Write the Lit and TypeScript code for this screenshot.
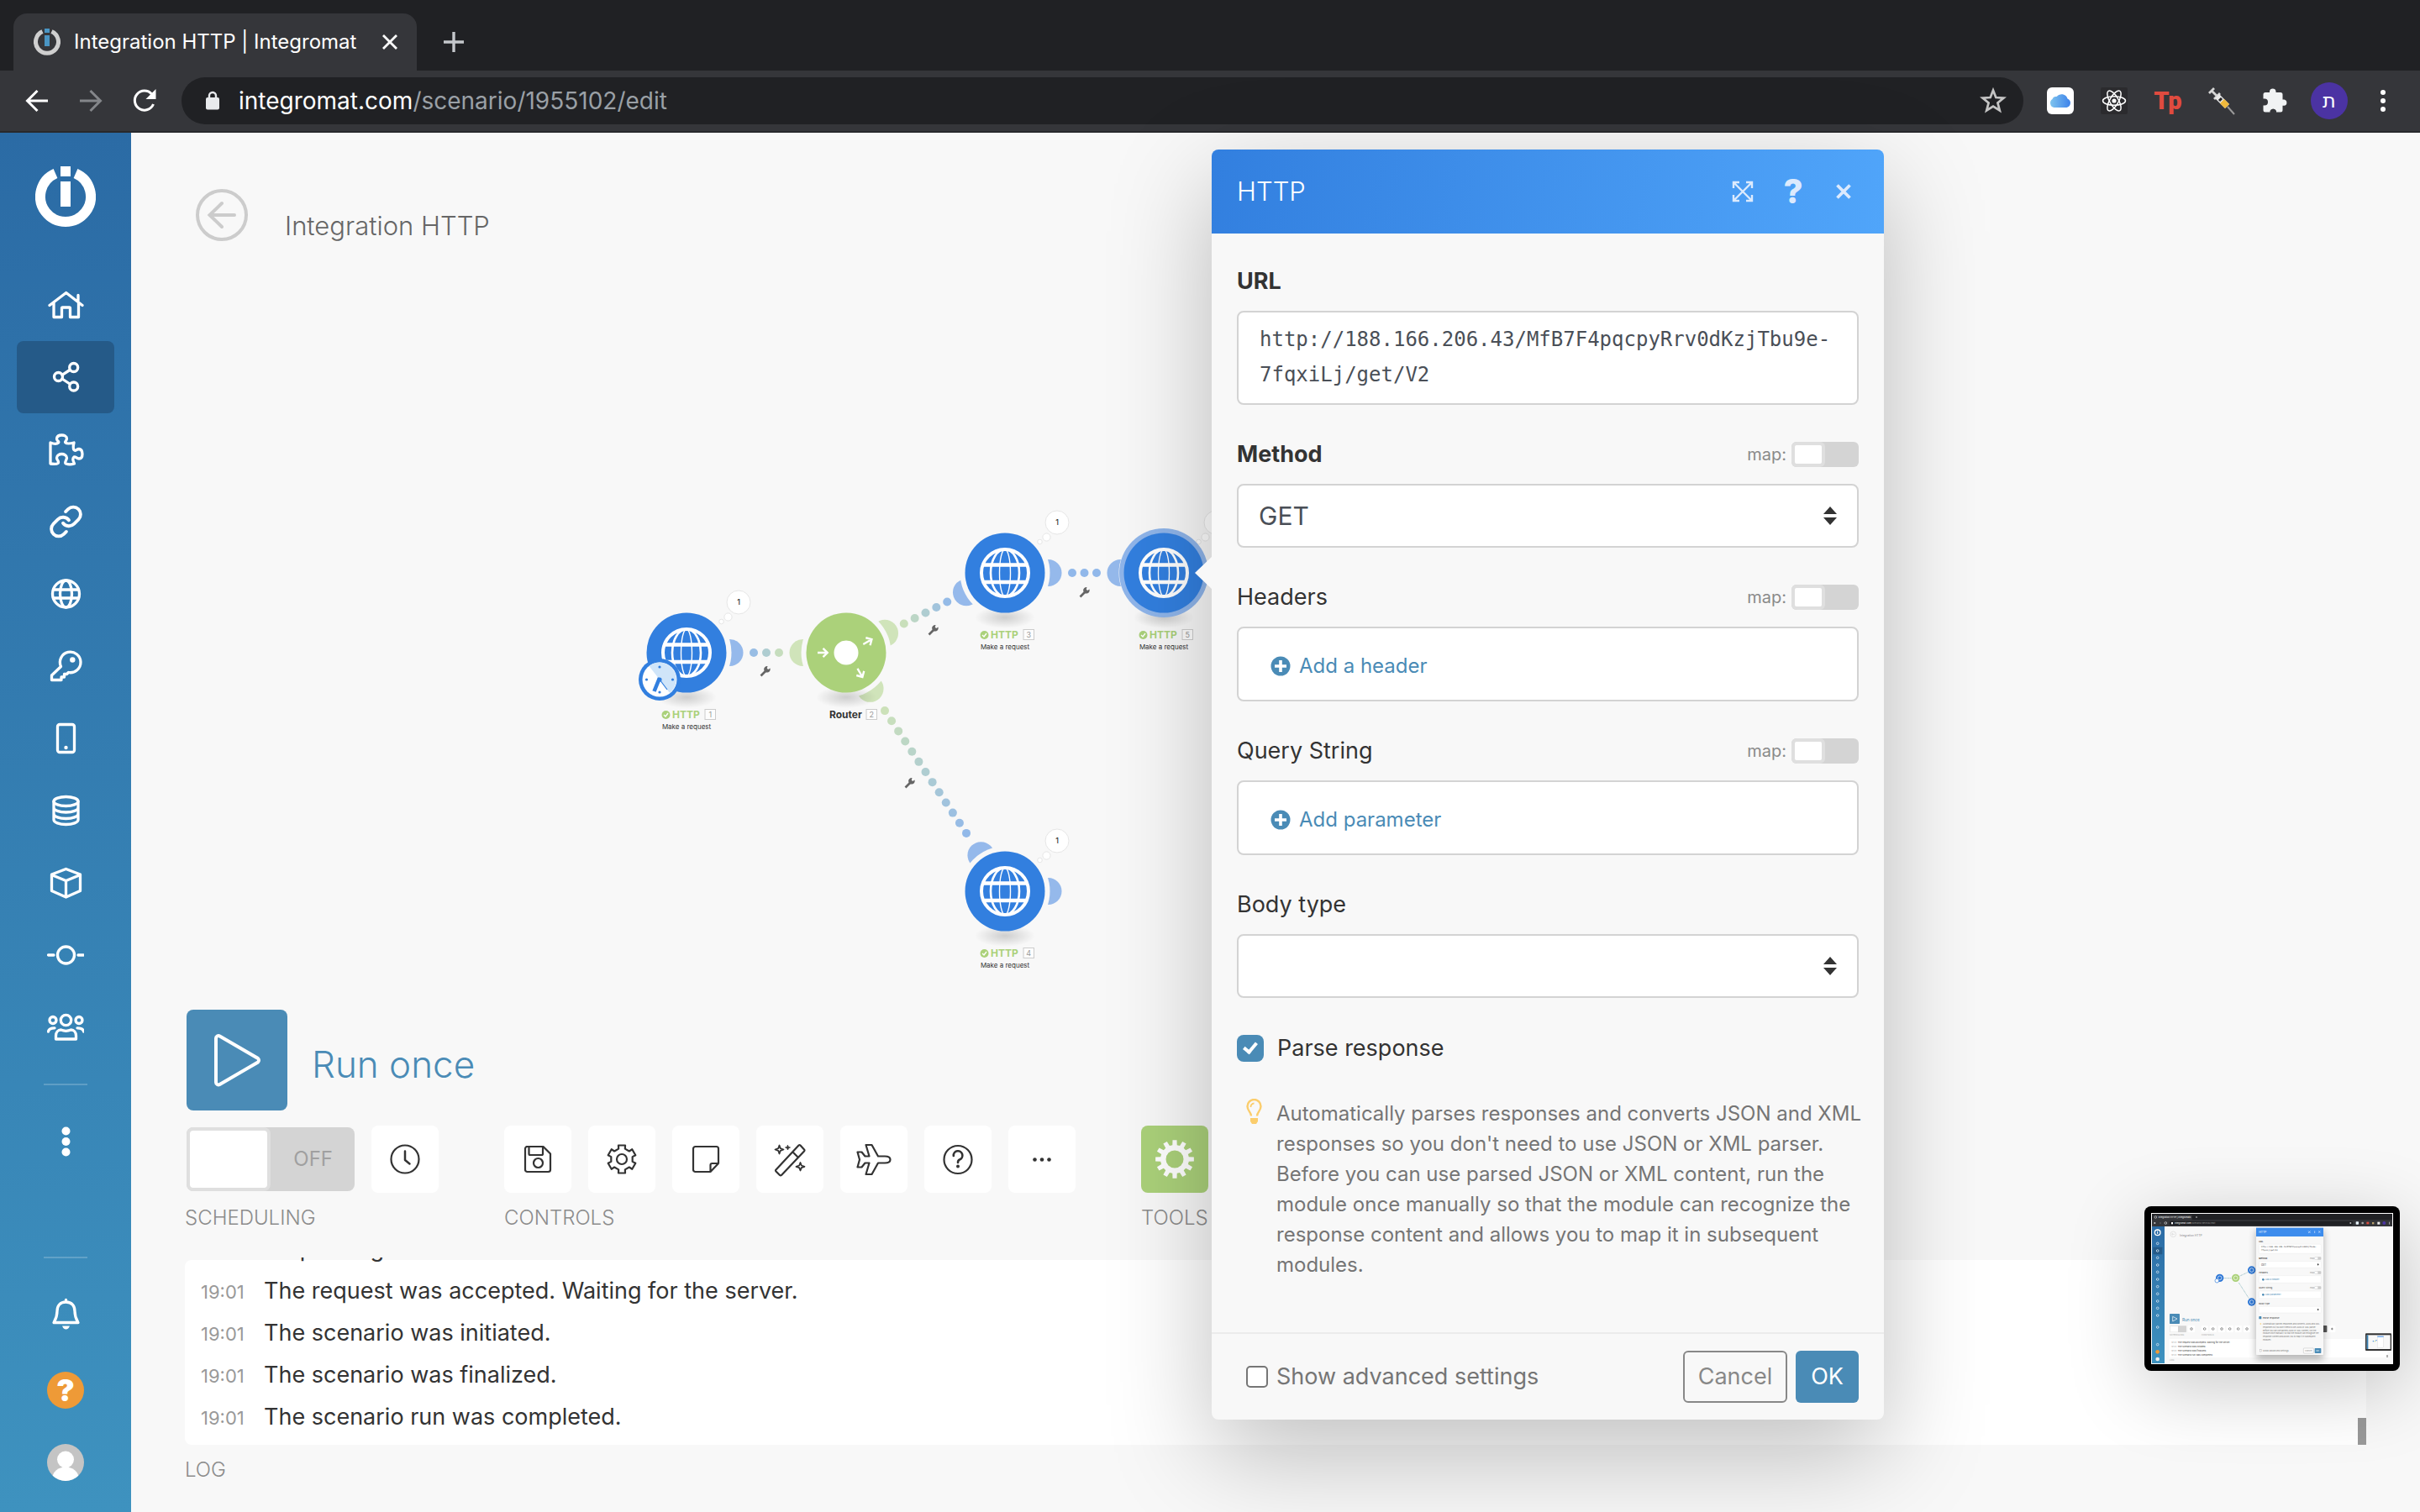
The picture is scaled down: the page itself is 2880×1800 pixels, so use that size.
import { LitElement, html, css, svg } from "lit";
import { customElement, property } from "lit/decorators.js";
import { classMap } from "lit/directives/class-map.js";

/** Outline of a toothed wheel, centred on cx, cy. */
function cog(cx: number, cy: number, teeth: number, outer: number, inner: number, tip: number, root: number): string {
  const pts: string[] = [];
  for (let i = 0; i < teeth; i++) {
    const a = (i / teeth) * Math.PI * 2 - Math.PI / 2;
    const add = (r: number, d: number) =>
      pts.push(`${(cx + r * Math.cos(a + d)).toFixed(2)} ${(cy + r * Math.sin(a + d)).toFixed(2)}`);
    add(inner, -root);
    add(outer, -tip);
    add(outer, tip);
    add(inner, root);
  }
  return `M${pts.join("L")}Z`;
}

const NAV = {
  home: svg`<path d="M3 22.5 22.7 7.5 42 22.5M8 19.5V36.5H17.5V26a1 1 0 0 1 1-1H26.500a1 1 0 0 1 1 1V36.500H37.500V19.500M37 10.500V17"/>`,
  share: svg`<circle cx="13.500" cy="21.500" r="5"/><circle cx="31.700" cy="10.500" r="5"/><circle cx="31.700" cy="33" r="5"/><path d="M18 19.300 27 13.500M18 24 27 30"/>`,
  puzzle: svg`<path d="M4 14C8 15.500 12 15.500 13.500 14C15 12 11 12 11.500 9C12 6 15 5 17.500 5S23.500 6 23.500 9C23.500 12 20.500 12.500 22 14C23.500 15.500 28 15 32 14C31 18 31 21 32 22.500C34 25 35 21.500 38 21.500C41 22 42 25 42 27.500S41 33 38 33C35 33 34 30 32 31C30 32.500 31 36 32.500 39C29 40 25 40 22.500 39C20 37.500 23.500 35 23.500 32C23.500 29 20 27.500 17.500 27.500S11.500 29 11.500 32C11.500 35 15 36.500 13 38.500C11 40 7 39.500 4 39Z"/>`,
  link: svg`<g transform="translate(1.500 1) scale(1.750)" stroke-width="2.200"><path d="M10 13a5 5 0 0 0 7.540.540l3-3a5 5 0 0 0-7.070-7.070l-1.720 1.710"/><path d="M14 11a5 5 0 0 0-7.540-.540l-3 3a5 5 0 0 0 7.070 7.070l1.710-1.710"/></g>`,
  globe: svg`<circle cx="22.500" cy="22" r="16"/><ellipse cx="22.500" cy="22" rx="7" ry="16"/><path d="M7.500 17H37.500M7.500 27H37.500"/>`,
  key: svg`<path d="M16.500 22.500 5.500 33V38.500H17V35H20.500V31.500H23.500L25.500 29.500A12.300 12.300 0 1 0 16.500 22.500Z"/><circle cx="30.300" cy="14.500" r="3.200" fill="#fff" stroke="none"/>`,
  tablet: svg`<rect x="12.500" y="5.500" width="20" height="33" rx="2.500"/><circle cx="22.500" cy="33" r="2.200" fill="#fff" stroke="none"/>`,
  database: svg`<ellipse cx="22.500" cy="11" rx="14.500" ry="5.500"/><path d="M8 11V33C8 36 14.500 38.500 22.500 38.500S37 36 37 33V11M8 18.500C8 21.500 14.500 24 22.500 24S37 21.500 37 18.500M8 26C8 29 14.500 31.500 22.500 31.500S37 29 37 26"/>`,
  cube: svg`<path d="M22.500 5.500 39.500 12V31.500L22.500 39 5.500 31.500V12ZM5.500 12.500 22.500 19.500 39.500 12.500M22.500 19.500V38.500"/>`,
  commit: svg`<circle cx="22.500" cy="22" r="10"/><path d="M1.500 22H8M37 22H43.500"/>`,
  users: svg`<circle cx="22.500" cy="13.500" r="6.200"/><circle cx="7" cy="13.500" r="4"/><circle cx="38" cy="13.500" r="4"/><path d="M10.500 36V32C10.500 28 13 25 16.500 25C20 26.500 25 26.500 28.500 25C32 25 34.500 28 34.500 32V36ZM1.500 27C2 24 4 22.800 9 22.800M43.500 27C43 24 41 22.800 36 22.800"/>`,
  more: svg`<g fill="#fff" stroke="none"><circle cx="22.500" cy="9.500" r="5"/><circle cx="22.500" cy="22" r="5"/><circle cx="22.500" cy="34.500" r="5"/></g>`,
  bell: svg`<path d="M22.500 7C15.500 7 12 11.500 12 18C12 25 10 28 8 31.500H37C35 28 33 25 33 18C33 11.500 29.500 7 22.500 7ZM22.500 4.500V7"/><path d="M18 35.500H27Q25.500 39.500 22.500 39.500T18 35.500Z" fill="#fff" stroke="none"/>`,
};

const TOOL = {
  clock: svg`<circle cx="20" cy="20" r="16.500"/><path d="M20 10.500V21L25.500 25.500" stroke-width="2.500"/>`,
  save: svg`<path d="M6.500 5H26.500L35 13.500V32.500A2.500 2.500 0 0 1 32.500 35H7.500A2.500 2.500 0 0 1 5 32.500V7.500A2.500 2.500 0 0 1 7.500 5M9.500 5V13.500A1.500 1.500 0 0 0 11 15H24.500A1.500 1.500 0 0 0 26 13.500V5"/><circle cx="20.500" cy="24.500" r="5.500"/>`,
  cog: svg`<path d="${cog(20, 20, 6, 17, 13, 0.24, 0.3)}"/><circle cx="20" cy="20" r="6"/>`,
  note: svg`<path d="M5 7.500A2.500 2.500 0 0 1 7.500 5H32.500A2.500 2.500 0 0 1 35 7.500V25L25.500 35H7.500A2.500 2.500 0 0 1 5 32.500ZM35 25H27.500A2 2 0 0 0 25.500 27V35"/>`,
  wand: svg`<path d="M3.500 32.500 30.500 3.500A1.500 1.500 0 0 1 32.500 3.500L37 8.500A1.500 1.500 0 0 1 37 10.500L10 39A1.500 1.500 0 0 1 8 39L3.500 34.500A1.500 1.500 0 0 1 3.500 32.500ZM23.500 11.500 29.500 17.500"/><path d="M7.500 3.500 8.800 7.200 12.500 8.500 8.800 9.800 7.500 13.500 6.200 9.800 2.500 8.500 6.200 7.200ZM32.500 24 33.800 27.500 37.500 28.800 33.800 30.100 32.500 33.500 31.200 30.100 27.500 28.800 31.200 27.500Z" stroke-width="1.800"/><path d="M17.500 3.500 18.500 5.500 20.500 6 18.500 6.700 17.500 9 16.500 6.700 14.500 6 16.500 5.500Z" fill="#333" stroke-width=".8"/>`,
  plane: svg`<path d="M13.500 3H20.500L28 16.500H36C40.500 16.500 42.500 18.500 42.500 20.500S40.500 24.500 36 24.500H28L20.500 38H13.500L17.500 24.500H12.500L8.500 29.500H3.500L6 20.500 3.500 11.500H8.500L12.500 16.500H17.500Z"/>`,
  help: svg`<circle cx="20" cy="20.500" r="16.500"/><path d="M14.800 16A5.300 5.300 0 1 1 22 20.500C20.500 21.200 20 22 20 24" stroke-width="2.600"/><circle cx="20" cy="28.500" r="2" fill="#333" stroke="none"/>`,
  dots: svg`<g fill="#333" stroke="none"><circle cx="11.500" cy="20.500" r="2.300"/><circle cx="20" cy="20.500" r="2.300"/><circle cx="28.500" cy="20.500" r="2.300"/></g>`,
};

type Glyph = unknown;

/* ---------- browser frame ---------- */

@customElement("browser-bar")
class BrowserBar extends LitElement {
  static styles = css`
    :host { display: block; background: #202124; font-family: Inter, "Liberation Sans", sans-serif; color: #fff; }
    svg { display: block; fill: none; }
    button { appearance: none; border: 0; background: none; padding: 0; margin: 0; color: inherit; font: inherit; display: grid; place-items: center; }
    .tabs { display: flex; align-items: stretch; padding: 16px 0 0 16px; height: 68px; }
    .tab { display: flex; align-items: center; background: #35363a; border-radius: 16px 16px 0 0; width: 480px; box-sizing: border-box; padding: 0 16px 0 24px; gap: 16px; }
    .tab-title { flex: 1; font-size: 24px; line-height: 28px; font-weight: 400; white-space: nowrap; }
    .close { width: 32px; height: 32px; }
    .new { width: 88px; }
    .bar { display: flex; align-items: center; height: 72px; background: #35363a; border-bottom: 2px solid #28292c; padding: 0 12px; }
    .nav { width: 64px; height: 56px; }
    .address { flex: 1; min-width: 0; display: flex; align-items: center; gap: 22px; height: 56px; border-radius: 28px; background: #202124; padding: 0 20px 0 28px; margin: 0 12px; box-sizing: border-box; }
    .url { flex: 1; font-size: 28px; line-height: 36px; color: #9aa0a6; white-space: nowrap; }
    .host { color: #fff; }
    .exts { display: flex; align-items: center; }
    .ext { width: 64px; height: 56px; }
    .icloud { width: 32px; height: 32px; border-radius: 6px; background: #fff; display: grid; place-items: center; }
    .tp { font: 900 29px/32px Roboto, sans-serif; color: #e04b3f; }
    .me { width: 44px; height: 44px; border-radius: 50%; background: #4b33a3; display: grid; place-items: center; font: 24px/28px "DejaVu Sans", sans-serif; }
  `;

  render() {
    return html`
      <div class="tabs">
        <div class="tab">
          <svg width="32" height="34" viewBox="0 0 32 34">
            <path d="M10.500 4.500A13.500 13.500 0 1 0 21.500 4.500" stroke="#cfcfcf" stroke-width="5"/>
            <path d="M16 1V6M16 9V22" stroke="#4a95c4" stroke-width="6"/>
          </svg>
          <span class="tab-title">Integration HTTP | Integromat</span>
          <button class="close" aria-label="Close tab">
            <svg width="20" height="20" viewBox="0 0 20 20"><path d="M2 2 18 18M18 2 2 18" stroke="#fff" stroke-width="2.800"/></svg>
          </button>
        </div>
        <button class="new" aria-label="New tab">
          <svg width="26" height="26" viewBox="0 0 26 26"><path d="M13 1V25M1 13H25" stroke="#c4c7cb" stroke-width="3.400"/></svg>
        </button>
      </div>
      <div class="bar">
        <button class="nav" aria-label="Back">
          <svg width="28" height="28" viewBox="0 0 28 28"><path d="M27 14H3M14.500 2 2.500 14 14.500 26" stroke="#fff" stroke-width="3"/></svg>
        </button>
        <button class="nav" aria-label="Forward">
          <svg width="28" height="28" viewBox="0 0 28 28"><path d="M1 14H25M13.500 2 25.500 14 13.500 26" stroke="#84868a" stroke-width="3"/></svg>
        </button>
        <button class="nav" aria-label="Reload">
          <svg width="30" height="30" viewBox="0 0 30 30"><path d="M25.500 19A11.500 11.500 0 1 1 23.500 7" stroke="#fff" stroke-width="3"/><path d="M28.500 1V13H16.500Z" fill="#fff"/></svg>
        </button>
        <div class="address">
          <svg width="18" height="24" viewBox="0 0 18 24"><rect x="1" y="8" width="16" height="14.500" rx="2" fill="#e8eaed"/><path d="M5 9V6A4 4 0 0 1 13 6V9" stroke="#e8eaed" stroke-width="2.400"/></svg>
          <span class="url"><span class="host">integromat.com</span>/scenario/1955102/edit</span>
          <button aria-label="Bookmark">
            <svg width="32" height="32" viewBox="0 0 32 32"><path d="M16 3.500 19.300 12 28.500 12.600 21.400 18.400 23.800 27.500 16 22.500 8.200 27.500 10.600 18.400 3.500 12.600 12.700 12Z" stroke="#c4c4c4" stroke-width="2.700"/></svg>
          </button>
        </div>
        <div class="exts">
          <button class="ext" aria-label="iCloud">
            <span class="icloud"><svg width="28" height="20" viewBox="0 0 28 20"><defs><linearGradient id="cl"><stop offset="0" stop-color="#7fc4ee"/><stop offset="1" stop-color="#3d82ea"/></linearGradient></defs><path d="M6.500 18A5.500 5.500 0 0 1 4.500 8 4.500 4.500 0 0 1 9.500 5 7.500 7.500 0 0 1 22.500 7.500 5.500 5.500 0 0 1 21.500 18Z" fill="url(#cl)"/></svg></span>
          </button>
          <button class="ext" aria-label="React">
            <svg width="32" height="32" viewBox="0 0 32 32"><rect width="32" height="32" rx="2" fill="#2b2b2e"/><g stroke="#fff" stroke-width="1.500"><ellipse cx="16" cy="16" rx="13.500" ry="5.200"/><ellipse cx="16" cy="16" rx="13.500" ry="5.200" transform="rotate(60 16 16)"/><ellipse cx="16" cy="16" rx="13.500" ry="5.200" transform="rotate(120 16 16)"/></g><circle cx="16" cy="16" r="2.600" fill="#fff"/></svg>
          </button>
          <button class="ext" aria-label="Tp extension"><span class="tp">Tp</span></button>
          <button class="ext" aria-label="Syringe extension">
            <svg width="34" height="34" viewBox="0 0 34 34"><path d="M2 8 8 2M5 5 11 11M8 15 15 8" stroke="#d6d6d6" stroke-width="2.800"/><path d="M9 14 14 9 26 21 21 26Z" fill="#e8e8e8"/><path d="M15 20 20 15 26 21 21 26Z" fill="#f0b93c"/><path d="M14 17 17 14" stroke="#222" stroke-width="3"/><path d="M24 24 32 33" stroke="#9a9a9a" stroke-width="2"/></svg>
          </button>
          <button class="ext" aria-label="Extensions">
            <svg width="32" height="32" viewBox="0 0 32 32"><path d="M24.500 14.500V8.500A2.500 2.500 0 0 0 22 6H16.500V4.800A3.800 3.800 0 0 0 9 4.800V6H4A2.500 2.500 0 0 0 1.500 8.500V13.500H3A4 4 0 0 1 3 21.500H1.500V27A2.500 2.500 0 0 0 4 29.500H9.500V28A4 4 0 0 1 17 28V29.500H22A2.500 2.500 0 0 0 24.500 27V21.800H26.300A3.700 3.700 0 0 0 26.300 14.500Z" fill="#f1f3f4"/></svg>
          </button>
          <button class="ext" aria-label="Profile"><span class="me">ת</span></button>
          <button class="ext" aria-label="Menu">
            <svg width="8" height="28" viewBox="0 0 8 28"><g fill="#fff"><circle cx="4" cy="4" r="3"/><circle cx="4" cy="14" r="3"/><circle cx="4" cy="24" r="3"/></g></svg>
          </button>
        </div>
      </div>
    `;
  }
}

/* ---------- left navigation ---------- */

@customElement("side-nav")
class SideNav extends LitElement {
  static styles = css`
    :host { display: flex; flex-direction: column; align-items: center; width: 156px; box-sizing: border-box; padding: 40px 0 16px; background: linear-gradient(#2b6ba5, #3e92bf); font-family: Inter, sans-serif; }
    svg { display: block; fill: none; stroke: #fff; stroke-width: 3.300; stroke-linecap: round; stroke-linejoin: round; }
    a { text-decoration: none; }
    .logo { margin-bottom: 50px; }
    .logo svg { stroke-width: 12; stroke-linecap: butt; }
    nav { display: flex; flex-direction: column; align-items: center; flex: 1; }
    .item { display: grid; place-items: center; width: 116px; height: 86px; border-radius: 8px; }
    .item.active { background: #255a88; }
    .rule { width: 52px; height: 2px; background: rgba(255, 255, 255, 0.2); margin: 24px 0; }
    .grow { flex: 1; }
    .support { margin-top: 4px; }
    .question { width: 44px; height: 44px; border-radius: 50%; background: #ee9a37; color: #fff; font-size: 36px; line-height: 44px; font-weight: 900; text-align: center; }
  `;

  private item(name: keyof typeof NAV, label: string, active = false) {
    return html`<a href="#${name}" aria-label=${label} class=${classMap({ item: true, active })}>
      <svg width="44" height="44" viewBox="0 0 44 44">${NAV[name]}</svg>
    </a>`;
  }

  render() {
    return html`
      <a class="logo" href="#start" aria-label="Integromat">
        <svg width="72" height="72" viewBox="0 0 72 72"><path d="M24 8.500A30 30 0 1 0 48 8.500"/><path d="M36 0V12M36 18V48"/></svg>
      </a>
      <nav>
        ${this.item("home", "Organization")}
        ${this.item("share", "Scenarios", true)}
        ${this.item("puzzle", "Templates")}
        ${this.item("link", "Connections")}
        ${this.item("globe", "Webhooks")}
        ${this.item("key", "Keys")}
        ${this.item("tablet", "Devices")}
        ${this.item("database", "Data stores")}
        ${this.item("cube", "Data structures")}
        ${this.item("commit", "Custom apps")}
        ${this.item("users", "Teams")}
        <div class="rule"></div>
        ${this.item("more", "More")}
        <div class="grow"></div>
        <div class="rule"></div>
        ${this.item("bell", "Notifications")}
        <a class="item support" href="#help" aria-label="Help"><span class="question">?</span></a>
        <a class="item" href="#profile" aria-label="Profile">
          <svg width="44" height="44" viewBox="0 0 44 44"><defs><clipPath id="round"><circle cx="22" cy="22" r="22"/></clipPath></defs><g clip-path="url(#round)" stroke="none"><rect width="44" height="44" fill="#c4c4c4"/><circle cx="22" cy="18.500" r="10" fill="#fff"/><ellipse cx="22" cy="40" rx="15.500" ry="12.500" fill="#fff"/></g></svg>
        </a>
      </nav>
    `;
  }
}

/* ---------- scenario diagram ---------- */

interface ScenarioNode {
  x: number;
  y: number;
  id: number;
  router?: boolean;
  selected?: boolean;
  scheduled?: boolean;
}

const BLUE = [145, 184, 234];
const GREEN = [205, 226, 184];
const mix = (t: number) => `rgb(${GREEN.map((g, i) => Math.round(g + (BLUE[i] - g) * t)).join(",")})`;

const NODES: ScenarioNode[] = [
  { x: 661, y: 447, id: 1, scheduled: true },
  { x: 851, y: 447, id: 2, router: true },
  { x: 1040, y: 352, id: 3 },
  { x: 1229, y: 352, id: 5, selected: true },
  { x: 1040, y: 731, id: 4 },
];

const LINKS = [
  { from: 0, to: 1, dots: 3, inset: 80, a: 1, b: 0, wrench: [755, 469] },
  { from: 1, to: 2, dots: 5, inset: 77, a: 0, b: 1, wrench: [955, 420] },
  { from: 2, to: 3, dots: 3, inset: 80, a: 1, b: 1, wrench: [1135, 375] },
  { from: 1, to: 4, dots: 13, inset: 83, a: 0, b: 1, wrench: [927, 602] },
];

@customElement("scenario-canvas")
class ScenarioCanvas extends LitElement {
  static styles = css`
    :host { display: block; flex: 1; min-height: 800px; }
    svg { display: block; width: 100%; height: 100%; font-family: Inter, sans-serif; }
    .app { font-size: 12px; font-weight: 700; fill: #abd17a; }
    .router { font-size: 12px; font-weight: 700; fill: #333; }
    .num { font-size: 9px; fill: #999; text-anchor: middle; }
    .action { font-size: 8px; fill: #333; text-anchor: middle; }
    .order { font-size: 9px; font-weight: 500; fill: #333; text-anchor: middle; }
  `;

  private port(x: number, y: number, dx: number, dy: number, green: boolean) {
    const d = Math.hypot(dx, dy);
    return svg`<circle cx=${x + (dx / d) * 51.5} cy=${y + (dy / d) * 51.5} r="16" fill=${green ? "#d0e4ba" : "#95b9eb"}/>`;
  }

  private link(l: (typeof LINKS)[number]) {
    const p = NODES[l.from];
    const q = NODES[l.to];
    const dx = q.x - p.x;
    const dy = q.y - p.y;
    const len = Math.hypot(dx, dy);
    const gap = (len - 2 * l.inset) / (l.dots - 1);
    const dots = Array.from({ length: l.dots }, (_, i) => {
      const s = (l.inset + i * gap) / len;
      const t = l.a + (l.b - l.a) * ((i + 0.3) / (l.dots - 0.4));
      return svg`<circle cx=${p.x + dx * s} cy=${p.y + dy * s} r="5" fill=${mix(t)}/>`;
    });
    return svg`
      ${this.port(p.x, p.y, dx, dy, !!p.router)}
      ${this.port(q.x, q.y, -dx, -dy, !!q.router)}
      ${dots}
      <g transform="translate(${l.wrench[0]} ${l.wrench[1]})">
        <path d="M-5.500 5.500 1.500 -1.500" stroke="#666" stroke-width="2.600" fill="none"/>
        <path d="M5.500 -3.500A3.800 3.800 0 1 1 2.500 -6L1.800 -3.200 3.200 -2Z" fill="#666"/>
      </g>`;
  }

  private globe() {
    return svg`
      <g stroke="#fff" fill="none">
        <circle r="28" stroke-width="4"/>
        <ellipse rx="17" ry="28" stroke-width="2.600"/>
        <ellipse rx="6.500" ry="28" stroke-width="1.400"/>
        <path d="M-26 -9.500H26M-26 11H26" stroke-width="4.600"/>
      </g>`;
  }

  private routerMark() {
    const arrow = svg`<path d="M-6 0H5.500M.5 -5.200 5.700 0 .5 5.200" stroke="#fff" stroke-width="2.400" fill="none"/>`;
    return svg`
      <circle r="14.500" fill="#fff"/>
      <g transform="translate(-28 0)">${arrow}</g>
      <g transform="translate(25.500 -13) rotate(-30)">${arrow}</g>
      <g transform="translate(16.500 24) rotate(60)">${arrow}</g>`;
  }

  private clock() {
    return svg`
      <g transform="translate(-32 32)">
        <circle r="25" fill="#327fdf"/>
        <circle r="20.500" fill="#fff"/>
        <path d="M0 0-12.500 -16A20.500 20.500 0 0 1 0 -20.500 20.500 20.500 0 0 1 12 16Z" fill="#d0e5f9"/>
        <path d="M0 -2-6.500 14" stroke="#327fdf" stroke-width="4.600"/>
        <path d="M0 0 9 12" stroke="#327fdf" stroke-width="1.200"/>
        <circle r="2.600" fill="#327fdf"/>
        <g fill="#327fdf"><circle cy="-15" r="1.600"/><circle cy="15" r="1.600"/><circle cx="-15.500" r="1.600"/><circle cx="15.500" r="1.600"/></g>
      </g>`;
  }

  private badge(id: number, x: number) {
    return svg`
      <rect x=${x} y="67.500" width="12.500" height="12" fill="#fdfdfd" stroke="#ccc"/>
      <text class="num" x=${x + 6.25} y="77">${id}</text>`;
  }

  private node(n: ScenarioNode) {
    const label = n.router
      ? svg`<text class="router" x="-20" y="78">Router</text>${this.badge(n.id, 24)}`
      : svg`
        <circle cx="-24.500" cy="74" r="5" fill="#abd17a"/>
        <path d="M-27 74-25 76-22 72" stroke="#fff" stroke-width="1.400" fill="none"/>
        <text class="app" x="-17" y="78">HTTP</text>
        ${this.badge(n.id, 22)}
        <text class="action" y="91">Make a request</text>`;
    const bubble = n.router
      ? ""
      : svg`
        <g fill="#fff" stroke="#e6e6e6">
          <circle cx="62" cy="-60" r="14"/><circle cx="49.500" cy="-42.500" r="4.600"/><circle cx="41.500" cy="-37" r="2.800"/>
        </g>
        <text class="order" x="62" y="-57">1</text>`;
    return svg`
      <g transform="translate(${n.x} ${n.y})">
        <ellipse cy="53" rx="36" ry="13" fill="url(#shade)"/>
        ${bubble}
        ${n.selected ? svg`<circle r="53" fill="#8fb5ea"/>` : svg``}
        <circle r="47.500" fill=${n.router ? "#abd17a" : "#327fdf"}/>
        ${n.router ? this.routerMark() : this.globe()}
        ${n.scheduled ? this.clock() : svg``}
        ${label}
      </g>`;
  }

  render() {
    const last = NODES[4];
    return html`
      <svg>
        <defs><radialGradient id="shade"><stop offset="0" stop-color="#000" stop-opacity=".17"/><stop offset="1" stop-color="#000" stop-opacity="0"/></radialGradient></defs>
        ${LINKS.map((l) => this.link(l))}
        ${this.port(last.x, last.y, 1, 0, false)}
        ${NODES.map((n) => svg`<circle cx=${n.x} cy=${n.y} r="53.500" fill="#f8f8f8"/>`)}
        ${NODES.map((n) => this.node(n))}
      </svg>
    `;
  }
}

/* ---------- module settings panel ---------- */

@customElement("module-panel")
class ModulePanel extends LitElement {
  static styles = css`
    :host { display: block; width: 800px; font-family: Inter, "Liberation Sans", sans-serif; color: #333; font-size: 27px; line-height: 30px; border-radius: 8px; background: #f8f8f8; box-shadow: 0 40px 120px rgba(0, 0, 0, 0.25); }
    svg { display: block; flex: none; fill: none; }
    button { appearance: none; border: 0; background: none; padding: 0; margin: 0; font: inherit; color: inherit; }
    .head { display: flex; align-items: center; height: 100px; padding: 0 30px; border-radius: 8px 8px 0 0; background: linear-gradient(100deg, #327fdf, #50a5fa); color: #fff; box-sizing: border-box; }
    h2 { flex: 1; margin: 0; font-size: 31px; line-height: 40px; font-weight: 300; }
    .tool { display: grid; place-items: center; width: 36px; height: 40px; margin-left: 24px; color: #dceafd; font-size: 40px; line-height: 40px; font-weight: 800; }
    .pointer { position: absolute; left: -20px; top: 484px; }
    .body { display: flex; flex-direction: column; gap: 44px; padding: 42px 30px 62px; }
    .row { display: flex; align-items: center; margin-bottom: 20px; }
    .name { flex: 1; }
    .strong { font-weight: 700; }
    .map { display: flex; align-items: center; gap: 6px; font-size: 20px; color: #8a8a8a; }
    .map input { appearance: none; margin: 0; width: 80px; height: 30px; border-radius: 6px; background: #d4d4d4; }
    .map input::before { content: ""; display: block; box-sizing: border-box; width: 40px; height: 30px; border: 4px solid #dfdfdf; border-radius: 6px; background: #fff; }
    .box { box-sizing: border-box; width: 100%; border: 2px solid #d3d3d3; border-radius: 8px; background: #fff; color: #4a4f57; margin: 0; }
    textarea.box { display: block; height: 112px; resize: none; overflow: hidden; padding: 11px 25px; font: 24px/42px "DejaVu Sans Mono", monospace; outline: none; }
    .pick { display: grid; align-items: center; }
    .pick > * { grid-area: 1 / 1; }
    .pick svg { justify-self: end; margin-right: 26px; pointer-events: none; }
    select.box { appearance: none; height: 76px; padding: 0 24px; font: 30px/40px Inter, sans-serif; }
    .list { display: flex; align-items: center; height: 89px; padding: 0 38px; }
    .add { display: flex; align-items: center; gap: 10px; font-size: 24px; line-height: 32px; color: #4a8bb6; padding-top: 5px; }
    .check { display: flex; align-items: center; gap: 16px; height: 32px; }
    .check input { appearance: none; margin: 0; width: 32px; height: 32px; border-radius: 8px; background: #4a8bb6; display: grid; place-items: center; }
    .check input::before { content: ""; box-sizing: border-box; width: 10px; height: 16px; border: solid #fff; border-width: 0 4px 4px 0; transform: rotate(40deg); margin-bottom: 4px; }
    .hint { display: flex; gap: 17px; padding-left: 11px; margin-right: -10px; }
    .hint p { margin: 0; font-size: 24px; line-height: 36px; color: #757575; }
    .foot { display: flex; align-items: center; gap: 10px; padding: 20px 30px; border-top: 2px solid #ebebeb; }
    .advanced { flex: 1; display: flex; align-items: center; gap: 10px; padding-left: 11px; color: #757575; }
    .advanced input { appearance: none; box-sizing: border-box; margin: 0; width: 26px; height: 26px; border: 2px solid #767676; border-radius: 5px; background: #fff; }
    .btn { height: 62px; border-radius: 6px; box-sizing: border-box; padding: 0 18px; }
    .cancel { border: 2px solid #888; color: #888; padding: 0 16px; }
    .ok { background: #4a8bb6; color: #fff; }
  `;

  private mapSwitch(id: string) {
    return html`<label class="map" for=${id}>map: <input id=${id} type="checkbox" role="switch" /></label>`;
  }

  private picker(id: string, value: string) {
    return html`<div class="pick">
      <select class="box" id=${id}><option>${value}</option></select>
      <svg width="16" height="22" viewBox="0 0 16 22"><path d="M8 0 16 9H0ZM8 22 0 13H16Z" fill="#333"/></svg>
    </div>`;
  }

  private adder(text: string) {
    return html`<div class="box list">
      <button class="add">
        <svg width="24" height="24" viewBox="0 0 24 24"><circle cx="12" cy="12" r="11.500" fill="#4a8bb6"/><path d="M12 5V19M5 12H19" stroke="#fff" stroke-width="3.600"/></svg>
        ${text}
      </button>
    </div>`;
  }

  render() {
    return html`
      <svg class="pointer" width="21" height="40" viewBox="0 0 21 40"><path d="M21 0 0 20 21 40Z" fill="#f8f8f8"/></svg>
      <div class="head">
        <h2>HTTP</h2>
        <button class="tool" aria-label="Expand">
          <svg width="26" height="26" viewBox="0 0 26 26" stroke="#dceafd" stroke-width="2.400"><path d="M2 2 24 24M24 2 2 24M2 9V2H9M17 2H24V9M24 17V24H17M9 24H2V17"/></svg>
        </button>
        <button class="tool" aria-label="Help">?</button>
        <button class="tool" aria-label="Close">
          <svg width="20" height="20" viewBox="0 0 20 20"><path d="M2.500 2.500 17.500 17.500M17.500 2.500 2.500 17.500" stroke="#dceafd" stroke-width="3.800"/></svg>
        </button>
      </div>
      <div class="body">
        <div>
          <div class="row"><label class="name strong" for="url">URL</label></div>
          <textarea class="box" id="url" rows="2" spellcheck="false" .value=${"http://188.166.206.43/MfB7F4pqcpyRrv0dKzjTbu9e-7fqxiLj/get/V2"}></textarea>
        </div>
        <div>
          <div class="row"><label class="name strong" for="method">Method</label>${this.mapSwitch("map-method")}</div>
          ${this.picker("method", "GET")}
        </div>
        <div>
          <div class="row"><span class="name">Headers</span>${this.mapSwitch("map-headers")}</div>
          ${this.adder("Add a header")}
        </div>
        <div>
          <div class="row"><span class="name">Query String</span>${this.mapSwitch("map-query")}</div>
          ${this.adder("Add parameter")}
        </div>
        <div>
          <div class="row"><label class="name" for="body-type">Body type</label></div>
          ${this.picker("body-type", "")}
        </div>
        <label class="check" for="parse"><input id="parse" type="checkbox" checked />Parse response</label>
        <div class="hint">
          <svg width="19" height="30" viewBox="0 0 19 30"><path d="M6 20.500C6 16 1.500 14.500 1.500 9A8 8 0 0 1 17.500 9C17.500 14.500 13 16 13 20.500" stroke="#fbcd6c" stroke-width="2.400"/><path d="M5.500 10A4 4 0 0 1 9.500 5.500" stroke="#fbcd6c" stroke-width="1.800"/><path d="M5 23H14V27L12 30H7L5 27Z" fill="#fbcd6c"/></svg>
          <p>Automatically parses responses and converts JSON and XML responses so you don't need to use JSON or XML parser. Before you can use parsed JSON or XML content, run the module once manually so that the module can recognize the response content and allows you to map it in subsequent modules.</p>
        </div>
      </div>
      <div class="foot">
        <label class="advanced" for="advanced"><input id="advanced" type="checkbox" />Show advanced settings</label>
        <button class="btn cancel">Cancel</button>
        <button class="btn ok">OK</button>
      </div>
    `;
  }
}

/* ---------- floating capture preview ---------- */

@customElement("capture-preview")
class CapturePreview extends LitElement {
  static styles = css`
    :host { display: block; box-sizing: border-box; width: 304px; padding: 8px; border-radius: 8px; background: #000; box-shadow: 0 20px 90px rgba(0, 0, 0, 0.22); }
    svg { display: block; width: 286px; height: 178px; border: 1px solid #fff; font-family: Inter, sans-serif; }
    .s { font-size: 8px; }
    .m { font-size: 11px; }
    .l { font-size: 16px; font-weight: 300; }
    .b { font-weight: 600; }
  `;

  render() {
    const icons = [61, 87, 112, 138, 163, 189, 215, 241, 267, 292, 318, 360, 422];
    const tools = [188, 218, 249, 278, 308, 339];
    const box = (y: number, h: number) => svg`<rect x="382" y=${y} width="222" height=${h} rx="3" fill="#fff" stroke="#e4e4e4"/>`;
    const map = (y: number) => svg`<text class="s" x="564" y=${y + 3} fill="#999">map:</text><rect x="581" y=${y - 5} width="23" height="10" rx="2" fill="#ccc"/><rect x="582" y=${y - 4} width="10" height="8" fill="#fff"/>`;
    const ball = (x: number, y: number, c: string) => svg`<circle cx=${x} cy=${y} r="14" fill=${c}/><circle cx=${x} cy=${y} r="7" fill="none" stroke="#fff" stroke-width="2"/>`;
    const hint = [
      "Automatically parses responses and converts JSON and XML",
      "responses so you don't need to use JSON or XML parser.",
      "Before you can use parsed JSON or XML content, run the",
      "module once manually so that the module can recognize the",
      "response content and allows you to map it in subsequent",
      "modules.",
    ];
    const log = [
      "The request was accepted. Waiting for the server.",
      "The scenario was initiated.",
      "The scenario was finalized.",
      "The scenario run was completed.",
    ];
    return html`
      <svg viewBox="0 0 858 534" fill="#333" role="img" aria-label="Screen capture">
        <defs>
          <linearGradient id="side" x2="0" y2="1"><stop offset="0" stop-color="#2b6ba5"/><stop offset="1" stop-color="#3e92bf"/></linearGradient>
          <filter id="soft" x="-30%" y="-30%" width="160%" height="160%"><feGaussianBlur stdDeviation="14"/></filter>
        </defs>
        <rect width="858" height="534" fill="#f8f8f8"/>
        <rect width="858" height="45" fill="#35363a"/>
        <path d="M0 0H858V22H143V8Q143 4 139 4H9Q5 4 5 8V22H0Z" fill="#202124"/>
        <rect x="62" y="26" width="656" height="15" rx="7" fill="#202124"/>
        <circle cx="13" cy="12" r="4" fill="none" stroke="#ccc" stroke-width="2"/>
        <text class="s" x="23" y="15" fill="#fff">Integration HTTP | Integromat</text>
        <path d="M134 9 139 15M139 9 134 15M156 12H162M159 9V15" stroke="#ddd" stroke-width="1.500"/>
        <text class="s" x="81" y="36" fill="#999"><tspan fill="#fff">integromat.com</tspan>/scenario/1955102/edit</text>
        <rect x="69" y="30" width="6" height="7" fill="#fff"/>
        <circle cx="10" cy="33" r="3" fill="#ccc"/><circle cx="30" cy="33" r="2" fill="#777"/><circle cx="49" cy="33" r="4" fill="none" stroke="#ddd" stroke-width="2"/><circle cx="709" cy="33" r="3" fill="#bbb"/>
        <rect x="728" y="28" width="10" height="10" rx="2" fill="#e8f3fd"/><circle cx="752" cy="33" r="4" fill="#aaa"/><rect x="766" y="29" width="9" height="8" fill="#d94b3f"/><rect x="786" y="30" width="7" height="7" fill="#b9a06c"/><rect x="805" y="29" width="9" height="9" fill="#eee"/><circle cx="829" cy="33" r="6" fill="#4b33a3"/><rect x="846" y="29" width="2" height="9" fill="#ddd"/>
        <rect y="45" width="45" height="489" fill="url(#side)"/>
        <rect x="4" y="119" width="33" height="26" rx="2" fill="#255a88"/>
        <circle cx="20" cy="67" r="10" fill="none" stroke="#fff" stroke-width="4"/><path d="M20 56V60M20 62V72" stroke="#fff" stroke-width="3"/>
        ${icons.map((y) => svg`<circle cx="20" cy=${y + 45} r="4" fill="none" stroke="#cfe0ee" stroke-width="2.500"/>`)}
        <circle cx="20" cy="493" r="7" fill="#ee9a37"/><circle cx="20" cy="519" r="7" fill="#eee"/>
        <circle cx="76" cy="73" r="10" fill="none" stroke="#ccc" stroke-width="1.500"/><path d="M81 73H71M75 69 71 73 75 77" fill="none" stroke="#ccc" stroke-width="1.500"/>
        <text font-size="10" x="99" y="81" fill="#888">Integration HTTP</text>
        <path d="M256 230H284M310 224 344 208M310 246 346 302" stroke="#9fc3c9" stroke-width="3" stroke-dasharray="3 1.500"/>
        ${ball(242, 229, "#2f78d6")}${ball(299, 229, "#abd17a")}${ball(356, 201, "#2f78d6")}${ball(356, 315, "#2f78d6")}
        <circle cx="232" cy="239" r="7" fill="#fff" stroke="#2f78d6" stroke-width="2"/>
        <rect x="63" y="357" width="36" height="36" rx="2" fill="#4a8bb6"/>
        <path d="M74 367V384L90 375Z" fill="none" stroke="#fff" stroke-width="2"/>
        <text font-size="14" x="108" y="383" fill="#4a8bb6">Run once</text>
        <rect x="64" y="400" width="59" height="23" rx="2" fill="#d4d4d4"/><rect x="65" y="401" width="28" height="21" fill="#fff"/>
        ${[141, ...tools].map((x) => svg`<rect x=${x - 12} y="399" width="24" height="24" rx="2" fill="#fff"/><circle cx=${x} cy="411" r="4" fill="none" stroke="#666" stroke-width="2"/>`)}
        <rect x="603" y="399" width="22" height="24" rx="2" fill="#555"/><rect x="631" y="399" width="24" height="24" rx="2" fill="#fff"/><path d="M639 411H647M643 407V415" stroke="#555" stroke-width="2"/>
        <text class="s" x="63" y="434" fill="#aaa">SCHEDULING</text><text class="s" x="177" y="434" fill="#aaa">CONTROLS</text>
        <rect x="62" y="447" width="779" height="66" fill="#fff"/>
        ${log.map((t, i) => svg`<text class="s" x="69" y=${461 + i * 15} fill="#aaa">19:01</text><text class="s" x="92" y=${461 + i * 15}>${t}</text>`)}
        <text class="s" x="63" y="525" fill="#aaa">LOG</text>
        <rect x="372" y="60" width="240" height="460" fill="#000" opacity=".3" filter="url(#soft)"/>
        <rect x="372" y="50" width="240" height="454" rx="2" fill="#f8f8f8"/>
        <rect x="372" y="50" width="240" height="31" fill="#3c8ced"/>
        <text font-size="10" x="382" y="69" fill="#fff">HTTP</text>
        <path d="M558 61 566 69M566 61 558 69M595 61 601 68M601 61 595 68M581 61V69" stroke="#dceafd" stroke-width="2"/>
        <text class="s b" x="382" y="101">URL</text>${box(109, 33)}
        <text font-size="7" x="390" y="121" font-family="DejaVu Sans Mono">http://188.166.206.43/MfB7F4pqcpyRrv0dKzjTbu9e-</text>
        <text font-size="7" x="390" y="133" font-family="DejaVu Sans Mono">7fqxiLj/get/V2</text>
        <text class="s b" x="382" y="162">Method</text>${map(159)}${box(170, 23)}<text font-size="9" x="390" y="185">GET</text>
        <text class="s" x="382" y="213">Headers</text>${map(210)}${box(221, 26)}<circle cx="397" cy="235" r="4" fill="#4a8bb6"/><text class="s" x="404" y="238" fill="#4a8bb6">Add a header</text>
        <text class="s" x="382" y="268">Query String</text>${map(264)}${box(276, 26)}<circle cx="397" cy="289" r="4" fill="#4a8bb6"/><text class="s" x="404" y="292" fill="#4a8bb6">Add parameter</text>
        <text class="s" x="382" y="323">Body type</text>${box(331, 23)}
        <path d="M590 181 593 177 596 181 593 185ZM590 342 593 338 596 342 593 346Z"/>
        <rect x="382" y="366" width="9" height="10" rx="2" fill="#4a8bb6"/><text class="s" x="396" y="374">Parse response</text>
        <circle cx="388" cy="393" r="2.500" fill="#fbcd6c"/>
        ${hint.map((t, i) => svg`<text font-size="7" x="396" y=${397 + i * 11} fill="#777">${t}</text>`)}
        <rect x="385" y="485" width="7" height="7" fill="#fff" stroke="#999"/><text class="s" x="396" y="492" fill="#777">Show advanced settings</text>
        <rect x="541" y="480" width="36" height="18" rx="2" fill="#fff" stroke="#999"/><text class="s" x="546" y="492" fill="#888">Cancel</text>
        <rect x="581" y="480" width="23" height="18" rx="2" fill="#4a8bb6"/><text class="s" x="586" y="492" fill="#fff">OK</text>
        <rect x="762" y="427" width="93" height="62" rx="3" fill="#333"/><rect x="767" y="433" width="84" height="50" fill="#f8f8f8"/><rect x="767" y="433" width="5" height="50" fill="#3580b4"/><rect x="805" y="437" width="22" height="42" fill="#fff" stroke="#ccc"/><rect x="805" y="437" width="22" height="3" fill="#3c8ced"/><circle cx="790" cy="455" r="2" fill="#2f78d6"/><circle cx="796" cy="455" r="2" fill="#abd17a"/><circle cx="801" cy="452" r="2" fill="#2f78d6"/>
        <rect x="838" y="504" width="4" height="9" fill="#888"/>
      </svg>
    `;
  }
}

/* ---------- page ---------- */

@customElement("app-root")
class AppRoot extends LitElement {
  @property({ attribute: false }) log = [
    "Requesting",
    "The request was accepted. Waiting for the server.",
    "The scenario was initiated.",
    "The scenario was finalized.",
    "The scenario run was completed.",
  ];

  static styles = css`
    :host { display: flex; flex-direction: column; min-height: 100vh; position: relative; overflow: hidden; background: #f8f8f8; font-family: Inter, "Liberation Sans", sans-serif; color: #333; }
    svg { display: block; fill: none; }
    button { appearance: none; border: 0; background: none; padding: 0; margin: 0; font: inherit; color: inherit; }
    .page { flex: 1; display: flex; align-items: stretch; }
    main { flex: 1; min-width: 0; display: flex; flex-direction: column; position: relative; }
    header { display: flex; align-items: flex-end; gap: 44px; padding: 67px 77px 43px; }
    h1 { margin: 0; font-size: 31px; line-height: 36px; font-weight: 300; color: #666; }
    .panel { position: absolute; left: 1286px; top: 20px; }
    .preview { position: absolute; right: 24px; bottom: 168px; }
    .bottom { padding: 0 64px 38px; }
    .run { display: flex; align-items: center; gap: 29px; padding-left: 2px; margin-bottom: 18px; color: #4a8bb6; font-size: 44px; line-height: 56px; font-weight: 300; }
    .play { display: grid; place-items: center; width: 120px; height: 120px; border-radius: 8px; background: #4a8bb6; }
    .run-text { padding-top: 10px; }
    .groups { display: flex; gap: 78px; margin-bottom: 38px; }
    .buttons { display: flex; align-items: center; gap: 20px; height: 80px; margin-bottom: 18px; }
    .scheduling .buttons { padding-left: 2px; }
    .square { display: grid; place-items: center; width: 80px; height: 80px; border-radius: 8px; background: #fff; }
    .square svg { stroke: #333; stroke-width: 2.200; stroke-linejoin: round; stroke-linecap: round; }
    .green { background: #abd17a; }
    .caption { display: block; font-size: 24px; line-height: 24px; font-weight: 300; color: #8c8c8c; }
    .switch { display: grid; align-items: center; }
    .switch > * { grid-area: 1 / 1; }
    .switch input { appearance: none; margin: 0; width: 200px; height: 76px; border-radius: 8px; background: #d4d4d4; }
    .switch input::before { content: ""; display: block; box-sizing: border-box; width: 100px; height: 76px; border: 4px solid #dfdfdf; border-radius: 8px; background: #fff; }
    .state { justify-self: end; margin-right: 26px; font-size: 24px; line-height: 32px; color: #a0a0a0; pointer-events: none; }
    .log { display: flex; align-items: flex-end; justify-content: space-between; height: 220px; border-radius: 8px 8px 0 8px; background: #fff; clip-path: inset(-3px 0 0 0); margin-bottom: 18px; }
    .lines { list-style: none; margin: 0; padding: 0 0 8px 19px; }
    .lines li { display: flex; align-items: baseline; gap: 20px; height: 50px; font-size: 27px; line-height: 50px; }
    time { width: 55px; font-size: 22px; color: #999; }
    .thumb { width: 10px; height: 32px; background: #999; }
  `;

  private square(glyph: Glyph, label: string, wide = false) {
    return html`<button class="square" aria-label=${label}>
      <svg width=${wide ? 46 : 40} height="41" viewBox=${wide ? "0 0 46 41" : "0 0 40 41"}>${glyph}</svg>
    </button>`;
  }

  render() {
    return html`
      <browser-bar></browser-bar>
      <div class="page">
        <side-nav></side-nav>
        <main>
          <header>
            <button aria-label="Back">
              <svg width="62" height="62" viewBox="0 0 62 62" stroke="#ccc" stroke-width="4" stroke-linecap="round"><circle cx="31" cy="31" r="29"/><path d="M46 31H16.500M31 17 16.500 31 31 45"/></svg>
            </button>
            <h1>Integration HTTP</h1>
          </header>
          <scenario-canvas></scenario-canvas>
          <section class="bottom">
            <div class="run">
              <button class="play" aria-label="Run once">
                <svg width="60" height="64" viewBox="0 0 60 64" stroke="#fff" stroke-width="4"><path d="M5 6A3 3 0 0 1 9.500 3.500L55 30A3 3 0 0 1 55 34.500L9.500 61A3 3 0 0 1 5 58.500Z"/></svg>
              </button>
              <span class="run-text">Run once</span>
            </div>
            <div class="groups">
              <div class="scheduling">
                <div class="buttons">
                  <div class="switch">
                    <input id="scheduling" type="checkbox" role="switch" aria-label="Scheduling" />
                    <label class="state" for="scheduling">OFF</label>
                  </div>
                  ${this.square(TOOL.clock, "Schedule")}
                </div>
                <span class="caption">SCHEDULING</span>
              </div>
              <div>
                <div class="buttons">
                  ${this.square(TOOL.save, "Save")}
                  ${this.square(TOOL.cog, "Settings")}
                  ${this.square(TOOL.note, "Notes")}
                  ${this.square(TOOL.wand, "Auto-align")}
                  ${this.square(TOOL.plane, "Explain flow", true)}
                  ${this.square(TOOL.help, "Help")}
                  ${this.square(TOOL.dots, "More")}
                </div>
                <span class="caption">CONTROLS</span>
              </div>
              <div>
                <div class="buttons">
                  <button class="square green" aria-label="Tools">
                    <svg width="48" height="48" viewBox="0 0 48 48"><g stroke="none"><path d="${cog(24, 24, 12, 23, 17, 0.11, 0.16)}" fill="#fff"/><circle cx="24" cy="24" r="10.500" fill="#abd17a"/></g></svg>
                  </button>
                </div>
                <span class="caption">TOOLS</span>
              </div>
            </div>
            <div class="log">
              <ul class="lines">
                ${this.log.map((line) => html`<li><time>19:01</time><span>${line}</span></li>`)}
              </ul>
              <div class="thumb"></div>
            </div>
            <span class="caption">LOG</span>
          </section>
          <module-panel class="panel"></module-panel>
        </main>
      </div>
      <capture-preview class="preview"></capture-preview>
    `;
  }
}
